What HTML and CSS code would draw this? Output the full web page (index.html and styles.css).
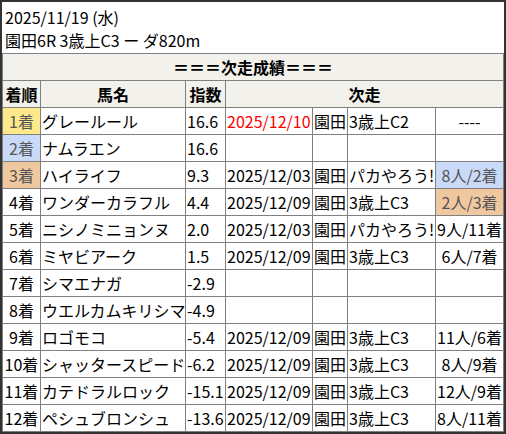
FILE: index.html
```html
<!DOCTYPE html>
<html lang="ja">
<head>
<meta charset="utf-8">
<link rel="stylesheet" href="styles.css">
</head>
<body>
<div class="frame">
  <div class="meta">
    <div>2025/11/19 (水)</div>
    <div>園田6R 3歳上C3 ー ダ820m</div>
  </div>
  <table class="res">
    <colgroup>
      <col class="c1"><col class="c2"><col class="c3"><col class="c4"><col class="c5"><col class="c6"><col class="c7">
    </colgroup>
    <tr class="hd"><th colspan="7">＝＝＝次走成績＝＝＝</th></tr>
    <tr class="hd"><th>着順</th><th>馬名</th><th>指数</th><th colspan="4">次走</th></tr>
    <tr><td class="pos p1">1着</td><td>グレールール</td><td>16.6</td><td class="red">2025/12/10</td><td>園田</td><td>3歳上C2</td><td class="ctr">----</td></tr>
    <tr><td class="pos p2">2着</td><td>ナムラエン</td><td>16.6</td><td></td><td></td><td></td><td></td></tr>
    <tr><td class="pos p3">3着</td><td>ハイライフ</td><td>9.3</td><td>2025/12/03</td><td>園田</td><td>パカやろう!</td><td class="ctr p2">8人/2着</td></tr>
    <tr><td class="pos">4着</td><td>ワンダーカラフル</td><td>4.4</td><td>2025/12/09</td><td>園田</td><td>3歳上C3</td><td class="ctr p3">2人/3着</td></tr>
    <tr><td class="pos">5着</td><td>ニシノミニョンヌ</td><td>2.0</td><td>2025/12/03</td><td>園田</td><td>パカやろう!</td><td class="ctr">9人/11着</td></tr>
    <tr><td class="pos">6着</td><td>ミヤビアーク</td><td>1.5</td><td>2025/12/09</td><td>園田</td><td>3歳上C3</td><td class="ctr">6人/7着</td></tr>
    <tr><td class="pos">7着</td><td>シマエナガ</td><td>-2.9</td><td></td><td></td><td></td><td></td></tr>
    <tr><td class="pos">8着</td><td>ウエルカムキリシマ</td><td>-4.9</td><td></td><td></td><td></td><td></td></tr>
    <tr><td class="pos">9着</td><td>ロゴモコ</td><td>-5.4</td><td>2025/12/09</td><td>園田</td><td>3歳上C3</td><td class="ctr">11人/6着</td></tr>
    <tr><td class="pos">10着</td><td>シャッタースピード</td><td>-6.2</td><td>2025/12/09</td><td>園田</td><td>3歳上C3</td><td class="ctr">8人/9着</td></tr>
    <tr><td class="pos">11着</td><td>カテドラルロック</td><td>-15.1</td><td>2025/12/09</td><td>園田</td><td>3歳上C3</td><td class="ctr">12人/9着</td></tr>
    <tr><td class="pos">12着</td><td>ペシュブロンシュ</td><td>-13.6</td><td>2025/12/09</td><td>園田</td><td>3歳上C3</td><td class="ctr">8人/11着</td></tr>
  </table>
</div>
</body>
</html>
```
FILE: styles.css
```css
html, body {
  margin: 0;
  padding: 0;
  background: #ffffff;
}
.frame {
  width: 506px;
  height: 434px;
  box-sizing: border-box;
  border: 2px solid #333333;
  background: #ffffff;
  overflow: hidden;
  font-family: "Noto Sans CJK JP", "Noto Sans", sans-serif;
  font-size: 16px;
  color: #000000;
}
.meta {
  height: 51px;
  box-sizing: border-box;
  padding: 4px 3px 1px 3px;
  line-height: 23px;
  white-space: nowrap;
}
.res {
  border-collapse: collapse;
  table-layout: fixed;
  width: 502px;
}
.c1 { width: 38px; }
.c2 { width: 145px; }
.c3 { width: 40px; }
.c4 { width: 87px; }
.c5 { width: 35px; }
.c6 { width: 88px; }
.c7 { width: 68px; }
.res th, .res td {
  border: 1px solid #808080;
  padding: 1px 1px;
  height: 24px;
  line-height: 24px;
  white-space: nowrap;
  overflow: hidden;
  text-align: left;
  box-sizing: content-box;
}
.res .hd th {
  background: #f2f1ec;
  font-weight: bold;
  text-align: center;
}
.res td.pos {
  text-align: center;
  padding: 1px 0;
}
.res td.ctr {
  text-align: center;
  padding: 1px 0;
}
.res td.red {
  color: #ff0000;
}
.res td.p1 {
  background: #fde98a;
  color: #555555;
}
.res td.p2 {
  background: #c9daf8;
  color: #555555;
}
.res td.p3 {
  background: #f0c8a0;
  color: #555555;
}
```
